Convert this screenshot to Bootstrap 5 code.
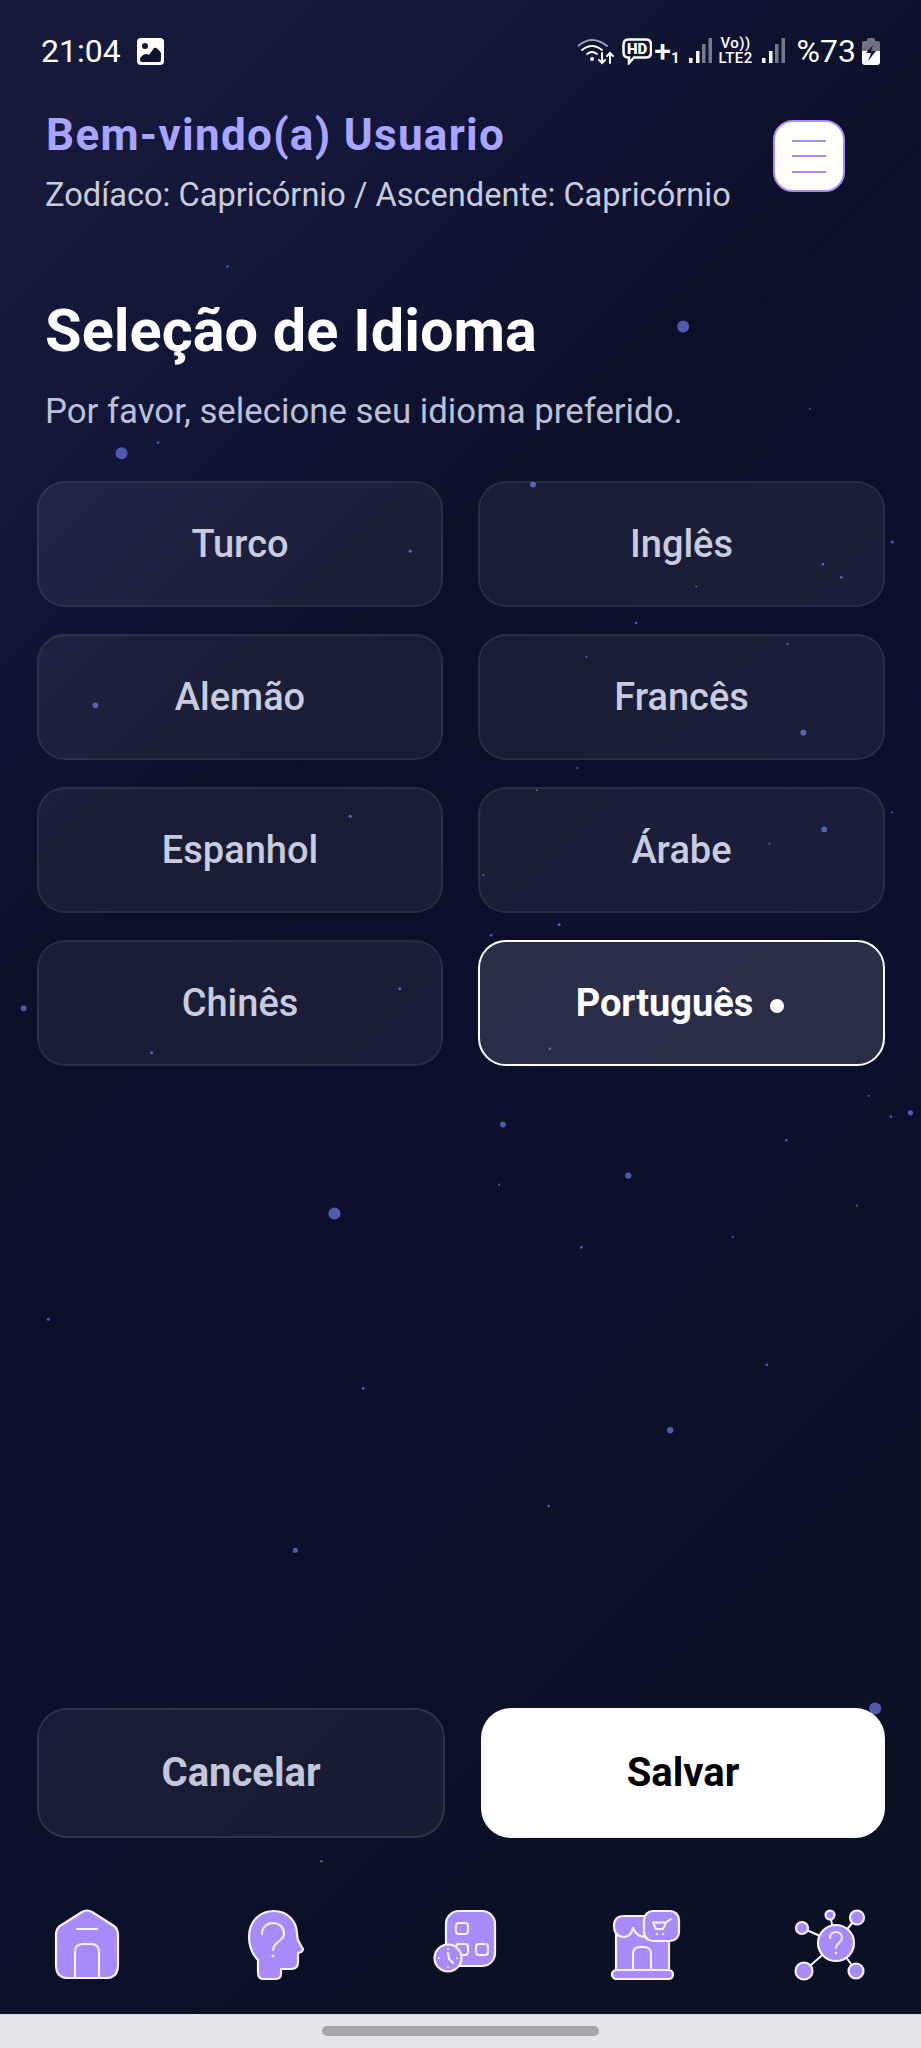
<!DOCTYPE html>
<html lang="pt">
<head>
    <meta charset="UTF-8">
    <meta name="viewport" content="width=device-width, initial-scale=1.0">
    <title>Seleção de Idioma</title>
    <link href="https://cdn.jsdelivr.net/npm/bootstrap@5.3.0/dist/css/bootstrap.min.css" rel="stylesheet">
    <style>
        html, body {
            margin: 0;
            width: 921px;
            height: 2048px;
            overflow: hidden;
            background: #0b1024;
            font-family: Roboto, "Liberation Sans", sans-serif;
        }
        .app-shell {
            position: relative;
            height: 2014px;
            background: linear-gradient(135deg, #171b3a 0%, #12173a 18%, #0b0f27 36%, #0c102e 55%, #0b1024 85%);
        }
        .star-layer {
            position: absolute;
            inset: 0;
            width: 921px;
            height: 2048px;
        }
        .app-content {
            position: relative;
            height: 2014px;
        }
        .status-row {
            height: 30px;
            margin-top: 36px;
            padding: 0 41px;
            color: #fff;
        }
        .status-time { font-size: 32px; line-height: 30px; }
        .status-pct { font-size: 32px; line-height: 30px; margin-left: 12px; margin-right: 6px; }
        .status-plus { font-size: 30px; line-height: 30px; font-weight: 500; margin-left: 2px; }
        .status-sub { font-size: 15px; font-weight: 700; align-self: flex-end; margin-bottom: -3px; }
        .status-vo {
            font-size: 15px;
            font-weight: 500;
            line-height: 15px;
            letter-spacing: .4px;
            text-align: center;
            margin: 0 8px 0 7px;
        }
        .head-row { padding: 43px 76px 0 46px; }
        .hello-title {
            color: #a8a4ff;
            font-size: 44px;
            line-height: 52px;
            font-weight: 700;
            letter-spacing: 1.3px;
            margin: 0;
        }
        .hello-sign {
            color: #c9cbdd;
            font-size: 32.6px;
            line-height: 40px;
            font-weight: 400;
            margin: 14px 0 0 -1px;
        }
        .menu-btn {
            width: 72px;
            height: 72px;
            margin-top: 11px;
            padding: 0;
            background: #fff;
            border: 2px solid #a78bfa;
            border-radius: 20px;
        }
        .menu-btn:hover { background: #fff; border-color: #a78bfa; }
        .menu-btn span {
            display: block;
            width: 34px;
            height: 2px;
            margin: 0 auto 13.5px;
            background: #a78bfa;
        }
        .menu-btn span:last-child { margin-bottom: 0; }
        .page-title {
            color: #fff;
            font-size: 59.5px;
            line-height: 64px;
            font-weight: 700;
            margin: 84px 0 0 45px;
        }
        .page-hint {
            color: #bcc0d6;
            font-size: 34.8px;
            line-height: 44px;
            margin: 26px 0 0 45px;
        }
        .lang-grid {
            display: grid;
            grid-template-columns: 406px 407px;
            column-gap: 35px;
            row-gap: 27px;
            padding: 0 0 0 37px;
            margin-top: 48px;
        }
        .lang-btn {
            height: 126px;
            padding: 1px 0 0;
            color: #c9cbdf;
            font-size: 38px;
            font-weight: 500;
            background: rgba(255, 255, 255, .06);
            border: 2px solid rgba(255, 255, 255, .07);
            border-radius: 28px;
        }
        .lang-btn:hover { color: #c9cbdf; background: rgba(255, 255, 255, .06); border-color: rgba(255, 255, 255, .07); }
        .lang-btn.lang-on {
            color: #fff;
            font-weight: 700;
            background: rgba(255, 255, 255, .13);
            border: 2.5px solid #fff;
        }
        .lang-dot {
            display: inline-block;
            width: 14px;
            height: 14px;
            margin-left: 17px;
            margin-right: 3px;
            vertical-align: 3px;
            background: #fff;
            border-radius: 50%;
        }
        .action-row {
            display: grid;
            grid-template-columns: 408px 404px;
            column-gap: 36px;
            padding-left: 37px;
            margin-top: auto;
            margin-bottom: 70px;
        }
        .act-btn {
            height: 130px;
            padding: 0;
            font-size: 40px;
            font-weight: 700;
            border-radius: 30px;
        }
        .act-cancel {
            color: #c4c7db;
            background: rgba(255, 255, 255, .05);
            border: 2px solid rgba(255, 255, 255, .1);
        }
        .act-cancel:hover { color: #c4c7db; background: rgba(255, 255, 255, .05); border-color: rgba(255, 255, 255, .1); }
        .act-save { color: #000; background: #fff; border: 0; }
        .act-save:hover { color: #000; background: #fff; }
        .nav-strip { height: 106px; }
        .nav-strip svg { display: block; margin: 0 auto; }
        .nav-strip .ic { fill: #a78bfa; stroke: #f6f2ff; stroke-width: 2.2; stroke-linejoin: round; stroke-linecap: round; }
        .nav-strip .ln { fill: none; stroke: #f6f2ff; stroke-width: 2; stroke-linecap: round; stroke-linejoin: round; }
        .gesture-bar {
            height: 34px;
            padding-top: 12px;
            background: #e4e6e9;
        }
        .gesture-pill {
            width: 277px;
            height: 10px;
            margin: 0 auto;
            background: #a5a7aa;
            border-radius: 5px;
        }
    </style>
</head>
<body>
    <div class="app-shell">
        <!-- background stars, coordinates on a 705 wide canvas -->
        <svg class="star-layer" viewBox="0 0 705 1568" fill="#4f5bb0">
            <circle cx="523" cy="250" r="4.6"/><circle cx="93" cy="347" r="4.6"/><circle cx="174" cy="204" r="1"/>
            <circle cx="408" cy="371" r="2.2"/><circle cx="121" cy="339" r="1"/><circle cx="18" cy="772" r="2.2"/>
            <circle cx="73" cy="540" r="2.2"/><circle cx="314" cy="422" r="1.2"/><circle cx="630" cy="432" r="1"/>
            <circle cx="644" cy="442" r="1"/><circle cx="533" cy="449" r=".8"/><circle cx="487" cy="477" r="1"/>
            <circle cx="449" cy="503" r=".8"/><circle cx="603" cy="493" r=".8"/><circle cx="615" cy="561" r="2.2"/>
            <circle cx="631" cy="635" r="2.2"/><circle cx="589" cy="646" r=".8"/><circle cx="268" cy="625" r="1.2"/>
            <circle cx="370" cy="670" r=".8"/><circle cx="428" cy="708" r="1.2"/><circle cx="376" cy="716" r="1"/>
            <circle cx="306" cy="757" r="1.2"/><circle cx="116" cy="806" r="1.2"/><circle cx="421" cy="803" r="1"/>
            <circle cx="385" cy="861" r="2.2"/><circle cx="697" cy="852" r="2"/><circle cx="682" cy="855" r="1"/>
            <circle cx="665" cy="839" r=".8"/><circle cx="602" cy="873" r="1"/><circle cx="481" cy="900" r="2.4"/>
            <circle cx="382" cy="907" r=".8"/><circle cx="656" cy="923" r=".8"/><circle cx="256" cy="929" r="4.6"/>
            <circle cx="561" cy="947" r=".8"/><circle cx="445" cy="955" r="1"/><circle cx="37" cy="1010" r="1.2"/>
            <circle cx="587" cy="1045" r="1"/><circle cx="278" cy="1063" r="1"/><circle cx="513" cy="1095" r="2.4"/>
            <circle cx="420" cy="1153" r="1"/><circle cx="226" cy="1187" r="2"/><circle cx="670" cy="1308" r="4.6"/>
            <circle cx="246" cy="1425" r="1"/><circle cx="683" cy="415" r="1.2"/><circle cx="620" cy="313" r=".8"/>
            <circle cx="411" cy="605" r=".8"/><circle cx="442" cy="588" r=".8"/><circle cx="683" cy="622" r=".8"/>
        </svg>

        <div class="app-content d-flex flex-column">
            <!-- status bar -->
            <div class="status-row d-flex align-items-center">
                <span class="status-time">21:04</span>
                <svg class="ms-3" width="27" height="27" viewBox="0 0 27 27">
                    <rect width="27" height="27" rx="4" fill="#fff"/>
                    <circle cx="8" cy="8" r="3" fill="#10142e"/>
                    <path d="M3 22 L3 20 Q8 14 12 17 L17 10 Q20 9 24 15 V22 Q24 24 22 24 H5 Q3 24 3 22Z" fill="#10142e"/>
                </svg>
                <svg class="ms-auto" width="36" height="27" viewBox="0 0 36 27" fill="none" stroke="#fff" stroke-linecap="round">
                    <path d="M0 8 Q14 -4 29 8" stroke="#9a9dab" stroke-width="2"/>
                    <path d="M4 12 Q14 4 24 12" stroke-width="2"/>
                    <path d="M9 16 Q14 12 19 16" stroke-width="2"/>
                    <circle cx="14" cy="21" r="2" fill="#fff" stroke="none"/>
                    <path d="M24 15V25M21 22l3 3 3-3M32 25V15M29 18l3-3 3 3" stroke-width="2"/>
                </svg>
                <svg class="ms-2" width="30" height="27" viewBox="0 0 30 27">
                    <path d="M6 1.500H24Q29 1.500 29 7V14Q29 19.500 24 19.500H12L7 25V19.500H6Q1.500 19.500 1.500 14V7Q1.500 1.500 6 1.500Z" fill="none" stroke="#fff" stroke-width="2.500"/>
                    <text x="15" y="16" text-anchor="middle" font-size="15" font-weight="900" fill="#fff" font-family="Roboto">HD</text>
                </svg>
                <span class="status-plus">+</span><span class="status-sub">1</span>
                <svg class="ms-2" width="24" height="26" viewBox="0 0 24 26">
                    <rect x="1" y="20" width="3.500" height="5" fill="#fff"/><rect x="8" y="13" width="3.500" height="12" fill="#fff"/>
                    <rect x="14" y="6" width="3.500" height="19" fill="#767a8a"/><rect x="20.500" y="0" width="3.500" height="25" fill="#767a8a"/>
                </svg>
                <span class="status-vo">Vo))<br>LTE2</span>
                <svg width="24" height="26" viewBox="0 0 24 26">
                    <rect x="1" y="20" width="3.500" height="5" fill="#fff"/><rect x="8" y="13" width="3.500" height="12" fill="#fff"/>
                    <rect x="14" y="6" width="3.500" height="19" fill="#767a8a"/><rect x="20.500" y="0" width="3.500" height="25" fill="#767a8a"/>
                </svg>
                <span class="status-pct">%73</span>
                <svg width="18" height="27" viewBox="0 0 18 27">
                    <path d="M5 2Q5 0 7 0H11Q13 0 13 2V3H16Q18 3 18 5V13H0V5Q0 3 2 3H5Z" fill="#6f7280"/>
                    <path d="M0 13H18V24Q18 27 15 27H3Q0 27 0 24Z" fill="#fff"/>
                    <path d="M11 7L4 15H9L6 23L14 13H9Z" fill="#10142e"/>
                </svg>
            </div>

            <!-- greeting -->
            <div class="head-row d-flex justify-content-between align-items-start">
                <div>
                    <h1 class="hello-title">Bem-vindo(a) Usuario</h1>
                    <p class="hello-sign">Zodíaco: Capricórnio / Ascendente: Capricórnio</p>
                </div>
                <button class="btn menu-btn" type="button" aria-label="Menu"><span></span><span></span><span></span></button>
            </div>

            <h2 class="page-title">Seleção de Idioma</h2>
            <p class="page-hint">Por favor, selecione seu idioma preferido.</p>

            <!-- languages -->
            <div class="lang-grid">
                <button class="btn lang-btn" type="button">Turco</button>
                <button class="btn lang-btn" type="button">Inglês</button>
                <button class="btn lang-btn" type="button">Alemão</button>
                <button class="btn lang-btn" type="button">Francês</button>
                <button class="btn lang-btn" type="button">Espanhol</button>
                <button class="btn lang-btn" type="button">Árabe</button>
                <button class="btn lang-btn" type="button">Chinês</button>
                <button class="btn lang-btn lang-on" type="button">Português<span class="lang-dot"></span></button>
            </div>

            <div class="action-row">
                <button class="btn act-btn act-cancel" type="button">Cancelar</button>
                <button class="btn act-btn act-save" type="button">Salvar</button>
            </div>

            <!-- bottom nav -->
            <div class="nav-strip row g-0">
                <div class="col">
                    <svg width="80" height="74" viewBox="0 0 80 74">
                        <path class="ic" d="M30 4Q35 1 40 4L62 18Q66 21 66 27V57Q66 70 54 70H16Q4 70 4 57V27Q4 21 8 18Z"/>
                        <path class="ln" d="M23 70V44Q23 36 31 36H39Q47 36 47 44V70M25 21H45"/>
                    </svg>
                </div>
                <div class="col">
                    <svg width="80" height="74" viewBox="0 0 80 74">
                        <path class="ic" d="M22 64V52Q13 43 13 29C13 13 24 3 38 3C52 3 61 14 61 26C61 30 62 33 64 36L67 41Q67 44 62 45V54Q62 61 55 61H45V66Q45 71 39 71H27Q22 71 22 64Z"/>
                        <path class="ln" d="M26 26C26 19 31 15 37 15C44 15 48 20 48 26C48 33 38 33 37 42"/>
                        <circle cx="37" cy="48" r="1.500" fill="#f6f2ff"/>
                    </svg>
                </div>
                <div class="col">
                    <svg width="80" height="74" viewBox="0 0 80 74">
                        <rect class="ic" x="25" y="3" width="49" height="55" rx="13"/>
                        <rect class="ln" x="35" y="15" width="12" height="11" rx="3"/>
                        <rect class="ln" x="35" y="36" width="12" height="11" rx="3"/>
                        <rect class="ln" x="55" y="36" width="12" height="11" rx="3"/>
                        <circle class="ic" cx="27" cy="50" r="13.500"/>
                        <path class="ln" d="M27 45L28 51L32 55"/>
                        <g fill="#f6f2ff"><circle cx="27" cy="41" r="1"/><circle cx="27" cy="59" r="1"/><circle cx="18" cy="50" r="1"/><circle cx="36" cy="50" r="1"/></g>
                    </svg>
                </div>
                <div class="col">
                    <svg width="80" height="74" viewBox="0 0 80 74">
                        <rect class="ic" x="11" y="20" width="53" height="44"/>
                        <path class="ln" d="M28 63V46Q28 39 35 39H39Q46 39 46 46V63"/>
                        <path class="ic" d="M19 8H44V30L40 29Q32 29 28 20Q26 29 18 29Q9 28 9 18Q9 8 19 8Z"/>
                        <rect class="ic" x="7" y="62" width="61" height="9" rx="4.500"/>
                        <rect class="ic" x="39" y="3" width="35" height="30" rx="9"/>
                        <path class="ln" d="M66 11L61 14.500L58 21H51L48 14.500H61"/>
                        <g fill="#f6f2ff"><circle cx="52" cy="26" r="1.200"/><circle cx="58" cy="26" r="1.200"/></g>
                    </svg>
                </div>
                <div class="col">
                    <svg width="80" height="74" viewBox="0 0 80 74">
                        <path class="ln" d="M47 35L13 20M47 35L41 7M47 35L68 9M47 35L15 63M47 35L67 63"/>
                        <circle class="ic" cx="47" cy="35" r="18"/>
                        <circle class="ic" cx="13" cy="20" r="6"/>
                        <circle class="ic" cx="41" cy="7" r="4.500"/>
                        <circle class="ic" cx="68" cy="9.500" r="7"/>
                        <circle class="ic" cx="15" cy="63" r="8.500"/>
                        <circle class="ic" cx="67" cy="63" r="7.500"/>
                        <path class="ln" d="M41 30C41 26 44 24 47 24C50 24 53 26 53 30C53 34 47 35 47 40"/>
                        <circle cx="47" cy="45" r="1.300" fill="#f6f2ff"/>
                    </svg>
                </div>
            </div>
        </div>
    </div>
    <div class="gesture-bar"><div class="gesture-pill"></div></div>

    <script src="https://cdn.jsdelivr.net/npm/bootstrap@5.3.0/dist/js/bootstrap.bundle.min.js"></script>
</body>
</html>
